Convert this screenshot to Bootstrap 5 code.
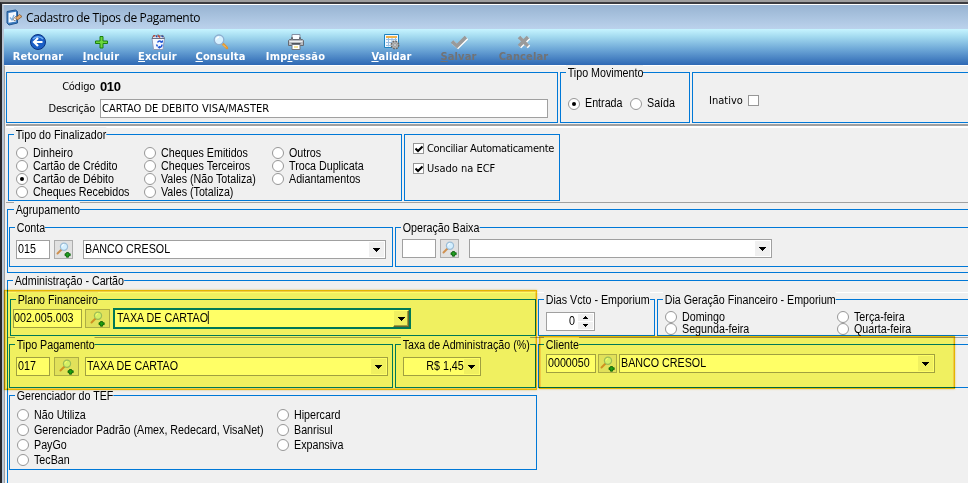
<!DOCTYPE html>
<html lang="pt-BR">
<head>
<meta charset="utf-8">
<meta name="viewport" content="width=device-width, initial-scale=1">
<title>Cadastro de Tipos de Pagamento</title>
<link href="https://cdn.jsdelivr.net/npm/bootstrap@5.3.0/dist/css/bootstrap.min.css" rel="stylesheet">
<style>
html,body{height:483px;overflow:hidden}
body{background:#f0f0f0;color:#000;font:12.5px/15px "Liberation Sans",Arial,sans-serif;white-space:nowrap}
.win{height:483px;border-top:2px solid #9f9f9f;overflow:hidden}
.win-in{border-top:2px solid #3c3c40;border-left:2px solid #26262a;height:481px}
.face{border-top:1px solid #fff;border-left:2px solid #b9c6d6;height:479px}
.titlebar{height:24px;background:linear-gradient(#98b4d2,#bbd2ec);font:12px/24px "Open Sans","Noto Sans",sans-serif;letter-spacing:-.35px;padding-left:2px}
.titlebar span{margin:1px 0 0 4px}
.tools{height:36px;background:linear-gradient(#c6f4ff 0,#a2d9ef 22%,#6ba5d6 58%,#2e68b4 100%);padding-left:3px}
.tool{background:none;border:0;padding:2px 0 0;color:#fff;font:bold 11px/12px "DejaVu Sans Condensed","DejaVu Sans",sans-serif;letter-spacing:.15px}
.tool svg{display:block;margin:0 auto 1px}
.tool[disabled]{color:#717274;opacity:1}
.w61{width:61px}.w62{width:62px}.w64{width:64px}.w49{width:49px}.w77{width:77px}.w73{width:73px}.w65{width:65px}.w69t{width:69px}
.t-val{margin-left:27px}
.body-area{border-top:1px solid #fff;border-left:1px solid #a0a0a0;height:418px;padding-left:1px}
.grp{border:1px solid #0078d7;flex:none}
.grp-open{border-right:0;flex:1 1 auto}
.lgd{width:fit-content;height:15px;margin:-8px 0 0 5px;padding:0 0 0 2px;line-height:16px;background:#f0f0f0;transform:scaleX(.855);transform-origin:0 50%}
.nx{display:inline-block;transform:scaleX(.857);transform-origin:0 50%}
.nx-end{transform-origin:100% 50%}
.tah{font-family:"DejaVu Sans Condensed","DejaVu Sans",sans-serif;font-size:11px;letter-spacing:0}
.fld{height:19px;border:1px solid #a0a0a0;background:#fff;padding:0 1px;line-height:17px;flex:none}
.look{height:19px;border:1px solid #adadad;background:#e1e1e1;padding:0;display:flex;align-items:center;justify-content:center;flex:none}
.combo{display:flex;justify-content:space-between;padding:0 1px}
.arw{width:15px;height:15px;margin-top:1px;background:#f0f0f0;display:flex;align-items:center;justify-content:center}
.arw svg,.look svg,.opt svg{display:block}
.opt{display:flex;align-items:center;height:13px;line-height:13px}
.g-fin .opt .nx,.g-tef .opt .nx{margin-top:2px}
.rd{width:12px;height:12px;border:1px solid #979797;border-radius:50%;background:#fff;margin-right:5px;flex:none;display:flex;align-items:center;justify-content:center}
.rd.on::after{content:"";width:4px;height:4px;border-radius:50%;background:#000}
.ck{width:11px;height:11px;border:1px solid #979797;background:#fff;flex:none;display:flex;align-items:center;justify-content:center}
.row-a{margin:6px 0 0 0;gap:2px}
.sep{height:4px;border-top:2px solid #a0a0a0;border-bottom:2px solid #fff;margin-top:1px}
.g-desc{width:552px;height:51px;padding-top:5px}
.g-desc .fld{margin-right:9px}
.g-mov{width:130px;height:51px}
.movopts{padding:17px 0 0 7px}
.movopts .opt+.opt{margin-left:1px}
.g-ina{height:51px;padding:21px 0 0 16px}
.g-ina .ck{margin-left:5px}
.desc-lb{width:88px;text-align:right;margin-right:5px;letter-spacing:-.25px}
.code{font:bold 13px/17px "Liberation Sans",Arial,sans-serif;letter-spacing:-.4px}
.row-b{margin:6px 0 0 2px;gap:2px}
.g-fin{width:394px;height:67px}
.fincols{padding:4px 0 0 7px}
.fincols>div{width:128px}
.g-chk{width:156px;height:67px;padding:7px 0 0 8px}
.g-chk .opt{margin-bottom:7px}
.g-chk .ck{margin-right:3px}
.tight{letter-spacing:-.32px}
.line{height:1px;background:#a0a0a0}
.g-agr{height:64px;margin:6px 0 0 1px;padding-left:1px}
.g-con{width:384px;height:40px}
.g-op{height:40px}
.g-adm{height:230px;margin:7px 0 0 1px;border-bottom:0}
.g-pla{width:526px;height:37px;margin-left:2px}
.g-dias{width:117px;height:37px;margin-left:2px}
.g-dia{height:37px;margin-left:2px}
.g-dia .opt,.g-dia .rd{height:12px}
.g-dia .opt{line-height:12px}
.g-tip{width:384px;height:44px;margin-left:1px}
.g-tax{width:141px;height:44px;margin-left:2px}
.g-cli{height:44px;margin-left:2px}
.g-tef{width:528px;height:75px;margin:7px 0 0 1px}
.g-tef .opt{height:15px}
.combo.foc{height:21px;border:2px solid #0078d7;line-height:17px;padding:0 0 0 2px}
.foc .arw{width:16px;height:17px;margin:0;border:1px solid;border-color:#fff #696969 #696969 #fff;box-shadow:inset -1px -1px #a0a0a0}
.caret{display:inline-block;width:1px;height:13px;background:#000;vertical-align:-2px}
.w34{width:34px}.w19{width:19px}.w25{width:25px}.w303{width:303px}.w69{width:69px;padding:0}.w298{width:298px}.w50p{width:50px}.w316{width:316px}
.mt-px1{margin-top:1px}
.r-agr{margin-top:10px;gap:2px}
.f-con{padding:5px 0 0 6px}
.f-con .look,.f-op .look,.f-tip .look{margin-left:4px}
.f-con .combo,.f-op .combo{margin-left:10px}
.f-op{padding:4px 0 0 6px}
.line.wht{background:#fff;margin-top:4px}
.r-ad1,.r-ad2{margin-top:6px}
.f-pla{padding:1px 0 0 2px}
.f-pla .look,.f-pla .combo{margin-left:3px}
.f-spin{width:49px;margin:5px 0 0 7px}
.spin{margin:1px 0 0 3px}
.spin svg{display:block}
.f-dia{padding:4px 0 0 7px}
.f-dia>div{width:172px}
.f-tip{padding:5px 0 0 6px}
.f-tip .combo{margin-left:6px}
.f-tax{width:78px;margin:5px 0 0 7px}
.f-cli{padding:2px 0 0 7px}
.f-cli .look{margin:0 2px}
.f-tef{padding:4px 0 0 7px}
.f-tef>div{width:260px}
.hl{position:absolute;background:#ffff66;mix-blend-mode:multiply}
.hl::after{content:"";position:absolute;inset:0;border:1px solid #f2c200;box-shadow:inset 0 0 0 1px #ffd84a,0 0 2px #e8cf7a}
.hl1{left:4px;top:290px;width:533px;height:100px}
.hl2{left:539px;top:336px;width:416px;height:53px}
</style>
<script src="https://cdn.jsdelivr.net/npm/bootstrap@5.3.0/dist/js/bootstrap.bundle.min.js"></script>
</head>
<body>
<svg width="0" height="0" class="position-absolute">
<symbol id="dn" viewBox="0 0 7 4"><path d="M0 0h7v1H6v1H5v1H4v1H3V3H2V2H1V1H0z"/></symbol>
<symbol id="find" viewBox="0 0 16 16"><path d="M1.500 11.500 5.500 7.500" stroke="#cf9050" stroke-width="2" stroke-linecap="round"/><circle cx="8" cy="4.700" r="3.600" fill="#d3efff" stroke="#9dbdd6" stroke-width="1.200"/><path d="M6 4.500a2 2 0 0 1 2-2" stroke="#fff" fill="none"/><path d="M10.500 10.500h2v1.200h1.700v2h-1.700v1.500h-2v-1.500H9v-2h1.500z" fill="#1fa01f" stroke="#075c07" stroke-width=".8"/></symbol>
</svg>
<div class="win"><div class="win-in"><div class="face">
<div class="titlebar d-flex align-items-center">
<svg width="16" height="17" viewBox="0 0 16 17"><path d="M1 2.500 9.500 1l2 1.500V14L3 16 1 14z" fill="#3d7cc0" stroke="#1f5590"/><path d="M2.500 4 10 2.700v9.800l-7.500 1.300z" fill="#f4f9ff"/><path d="M4 8.500l2 2.500 2-5" stroke="#7db0e0" stroke-width="1.300" fill="none"/><path d="M7 10.500 10 7l2 1.800-3 3z" fill="#fff" stroke="#555" stroke-width=".7"/><path d="M9.500 9 13.500 5.500 16 7.500l-4.500 3.500z" fill="#e2a566" stroke="#7c5228" stroke-width=".7"/></svg>
<span>Cadastro de Tipos de Pagamento</span></div>
<div class="tools d-flex">
<button class="tool w62"><svg width="16" height="16" viewBox="0 0 16 16"><circle cx="8" cy="8" r="7.500" fill="#1b5fc6" stroke="#0b3583"/><path d="M3 5a6 5 0 0 1 10 0" stroke="#6fb0f5" stroke-width="1.500" fill="none"/><path d="M12.500 8H4.500M8 4 4 8l4 4" stroke="#fff" stroke-width="2.200" fill="none"/></svg>Retornar</button>
<button class="tool w64"><svg width="16" height="16" viewBox="0 0 16 16"><path d="M7 2.500h3v4.500h4.500v2.500H10V14H7V9.500H2.500V7H7z" fill="#6bd63c" stroke="#1a8010"/></svg><u>I</u>ncluir</button>
<button class="tool w49"><svg width="16" height="16" viewBox="0 0 16 16"><path d="M2 4.500h12.500L13 15.500H3.500z" fill="#f5f8ff" stroke="#8c9ab8"/><path d="M2 4.500 3.500 1.500 6 2 8 .8l2 1.200 3-.7L14.500 4.500z" fill="#dfe4ee" stroke="#555a72" stroke-width=".8"/><path d="M3 2.500l2-1M8 1.500l2 2" stroke="#c33b25" stroke-width="1.300"/><path d="M6 2.500h1.500M11.500 2l1.500 1" stroke="#2345a8" stroke-width="1.300"/><path d="M7.500 8.500c1-2 4-2 4 .2M12 10.500c0 3-2 3-3.500 3M7.500 12.500 6.500 10.500" stroke="#1c54d4" stroke-width="1.500" fill="none"/><path d="M10 8.500h3V6M10 11.800v3L7.500 13.300z" fill="#1c54d4"/></svg><u>E</u>xcluir</button>
<button class="tool w77"><svg width="17" height="16" viewBox="0 0 17 16"><path d="M11 10l4 4" stroke="#e2942f" stroke-width="2.500" stroke-linecap="round"/><path d="M11 10.500l3 3" stroke="#f9cf70"/><circle cx="7" cy="5.800" r="4.800" fill="#d8f1ff" stroke="#8dafd0" stroke-width="1.300"/><path d="M4.300 5.500a3 3 0 0 1 2.700-2.500" stroke="#fff" stroke-width="1.300" fill="none"/></svg><u>C</u>onsulta</button>
<button class="tool w73"><svg width="16" height="16" viewBox="0 0 16 16"><path d="M4 .5h8v5H4z" fill="#fafcff" stroke="#8491a5"/><path d="M1.500 5.500h2v-2h1v2h7v-2h1v2h2l1 1v5H.500v-5z" fill="#b7bac0" stroke="#666a72"/><path d="M1.500 7.500h13" stroke="#eceef0"/><path d="M3.500 9.500h9" stroke="#50545c"/><path d="M4 10.500h8v5H4z" fill="#fff" stroke="#707680"/><path d="M6 13h4" stroke="#e8c840"/></svg>Imp<u>r</u>essão</button>
<button class="tool w65 t-val"><svg width="16" height="16" viewBox="0 0 16 16"><path d="M.5.500h14v13H.500z" fill="#f3f9ff" stroke="#1d82c0"/><path d="M2 3h11" stroke="#f2b24a" stroke-width="2"/><path d="M2 5.500h11M2 8.500h10M2 11.500h7M4.500 4v8.500M8 4v8.500M11.500 4v6" stroke="#9bbfe2"/><circle cx="11" cy="11" r="3.700" fill="#b5b5b5" stroke="#696969" stroke-width="1.500" stroke-dasharray="1.800 1.100"/><circle cx="11" cy="11" r="1.300" fill="#eef3f8" stroke="#777" stroke-width=".6"/></svg><u>V</u>alidar</button>
<button class="tool w69t" disabled><svg width="18" height="16" viewBox="0 0 18 16"><path d="M3 8.500 8 13 17 4" stroke="#fff" stroke-width="3.400" fill="none"/><path d="M2 7.500 7 12 16 3" stroke="#9a9a9a" stroke-width="3.600" fill="none"/></svg><u>S</u>alvar</button>
<button class="tool w61" disabled><svg width="16" height="16" viewBox="0 0 16 16"><path d="M4 4l9 9M13 4l-9 9" stroke="#fff" stroke-width="3.400"/><path d="M3 3l9 9M12 3l-9 9" stroke="#9a9a9a" stroke-width="3.600"/></svg>Cancelar</button>
</div>
<div class="body-area">
<div class="d-flex row-a">
<div class="grp g-desc tah">
<div class="d-flex align-items-center"><div class="desc-lb">Código</div><span class="code">010</span></div>
<div class="d-flex align-items-center mt-1"><div class="desc-lb">Descrição</div><div class="fld flex-grow-1">CARTAO DE DEBITO VISA/MASTER</div></div>
</div>
<div class="grp g-mov"><div class="lgd">Tipo Movimento</div><div class="d-flex movopts"><div class="opt"><i class="rd on"></i><span class="nx">Entrada</span></div><div class="opt"><i class="rd"></i><span class="nx">Saída</span></div></div></div>
<div class="grp grp-open g-ina tah"><div class="opt">Inativo<i class="ck"></i></div></div>
</div>
<div class="sep"></div>
<div class="d-flex row-b">
<div class="grp g-fin"><div class="lgd">Tipo do Finalizador</div><div class="d-flex fincols">
<div><div class="opt"><i class="rd"></i><span class="nx">Dinheiro</span></div><div class="opt"><i class="rd"></i><span class="nx">Cartão de Crédito</span></div><div class="opt"><i class="rd on"></i><span class="nx">Cartão de Débito</span></div><div class="opt"><i class="rd"></i><span class="nx">Cheques Recebidos</span></div></div>
<div><div class="opt"><i class="rd"></i><span class="nx">Cheques Emitidos</span></div><div class="opt"><i class="rd"></i><span class="nx">Cheques Terceiros</span></div><div class="opt"><i class="rd"></i><span class="nx">Vales (Não Totaliza)</span></div><div class="opt"><i class="rd"></i><span class="nx">Vales (Totaliza)</span></div></div>
<div><div class="opt"><i class="rd"></i><span class="nx">Outros</span></div><div class="opt"><i class="rd"></i><span class="nx">Troca Duplicata</span></div><div class="opt"><i class="rd"></i><span class="nx">Adiantamentos</span></div></div>
</div></div>
<div class="grp g-chk tah"><div class="opt"><i class="ck"><svg width="8" height="8" viewBox="0 0 8 8"><path d="M.5 3.500 3 6 7.500 1.500" stroke="#000" stroke-width="2" fill="none"/></svg></i><span class="tight">Conciliar Automaticamente</span></div><div class="opt"><i class="ck"><svg width="8" height="8" viewBox="0 0 8 8"><path d="M.5 3.500 3 6 7.500 1.500" stroke="#000" stroke-width="2" fill="none"/></svg></i>Usado na ECF</div></div>
</div>
<div class="line mt-px1"></div>
<div class="grp grp-open g-agr"><div class="lgd">Agrupamento</div>
<div class="d-flex r-agr">
<div class="grp g-con"><div class="lgd">Conta</div><div class="d-flex f-con"><div class="fld w34"><span class="nx">015</span></div><button class="look w19"><svg width="16" height="16"><use href="#find"/></svg></button><div class="fld combo w303"><span class="nx">BANCO CRESOL</span><span class="arw"><svg width="7" height="4"><use href="#dn"/></svg></span></div></div></div>
<div class="grp grp-open g-op"><div class="lgd">Operação Baixa</div><div class="d-flex f-op"><div class="fld w34"></div><button class="look w19"><svg width="16" height="16"><use href="#find"/></svg></button><div class="fld combo w303"><span></span><span class="arw"><svg width="7" height="4"><use href="#dn"/></svg></span></div></div></div>
</div></div>
<div class="grp grp-open g-adm"><div class="lgd">Administração - Cartão</div>
<div class="line wht"></div>
<div class="d-flex r-ad1">
<div class="grp g-pla"><div class="lgd">Plano Financeiro</div><div class="d-flex align-items-center f-pla"><div class="fld w69"><span class="nx">002.005.003</span></div><button class="look w25"><svg width="16" height="16"><use href="#find"/></svg></button><div class="fld combo foc w298"><span class="nx">TAXA DE CARTAO<i class="caret"></i></span><span class="arw"><svg width="7" height="4"><use href="#dn"/></svg></span></div></div></div>
<div class="grp g-dias"><div class="lgd">Dias Vcto - Emporium</div><div class="fld combo f-spin"><span class="flex-grow-1 text-end"><span class="nx nx-end">0</span></span><span class="spin"><svg width="15" height="15" viewBox="0 0 15 15"><path d="M0 0h15v7H0zM0 8h15v7H0z" fill="#f0f0f0"/><path d="M7 2h1v1h1v1h1v1H5V4h1V3h1zM5 10h5v1H9v1H8v1H7v-1H6v-1H5z"/></svg></span></div></div>
<div class="grp grp-open g-dia"><div class="lgd">Dia Geração Financeiro - Emporium</div><div class="d-flex f-dia"><div><div class="opt"><i class="rd"></i><span class="nx">Domingo</span></div><div class="opt"><i class="rd"></i><span class="nx">Segunda-feira</span></div></div><div><div class="opt"><i class="rd"></i><span class="nx">Terça-feira</span></div><div class="opt"><i class="rd"></i><span class="nx">Quarta-feira</span></div></div></div></div>
</div>
<div class="line mt-px1"></div>
<div class="d-flex r-ad2">
<div class="grp g-tip"><div class="lgd">Tipo Pagamento</div><div class="d-flex f-tip"><div class="fld w34"><span class="nx">017</span></div><button class="look w25"><svg width="16" height="16"><use href="#find"/></svg></button><div class="fld combo w303"><span class="nx">TAXA DE CARTAO</span><span class="arw"><svg width="7" height="4"><use href="#dn"/></svg></span></div></div></div>
<div class="grp g-tax"><div class="lgd">Taxa de Administração (%)</div><div class="fld combo f-tax"><span class="flex-grow-1 text-end"><span class="nx nx-end">R$ 1,45</span></span><span class="arw"><svg width="7" height="4"><use href="#dn"/></svg></span></div></div>
<div class="grp grp-open g-cli"><div class="lgd">Cliente</div><div class="d-flex f-cli"><div class="fld w50p"><span class="nx">0000050</span></div><button class="look w19"><svg width="16" height="16"><use href="#find"/></svg></button><div class="fld combo w316"><span class="nx">BANCO CRESOL</span><span class="arw"><svg width="7" height="4"><use href="#dn"/></svg></span></div></div></div>
</div>
<div class="grp g-tef"><div class="lgd">Gerenciador do TEF</div><div class="d-flex f-tef"><div><div class="opt"><i class="rd"></i><span class="nx">Não Utiliza</span></div><div class="opt"><i class="rd"></i><span class="nx">Gerenciador Padrão (Amex, Redecard, VisaNet)</span></div><div class="opt"><i class="rd"></i><span class="nx">PayGo</span></div><div class="opt"><i class="rd"></i><span class="nx">TecBan</span></div></div><div><div class="opt"><i class="rd"></i><span class="nx">Hipercard</span></div><div class="opt"><i class="rd"></i><span class="nx">Banrisul</span></div><div class="opt"><i class="rd"></i><span class="nx">Expansiva</span></div></div></div></div>
</div>
</div>
</div></div></div>
<div class="hl hl1"></div><div class="hl hl2"></div>
</body>
</html>
